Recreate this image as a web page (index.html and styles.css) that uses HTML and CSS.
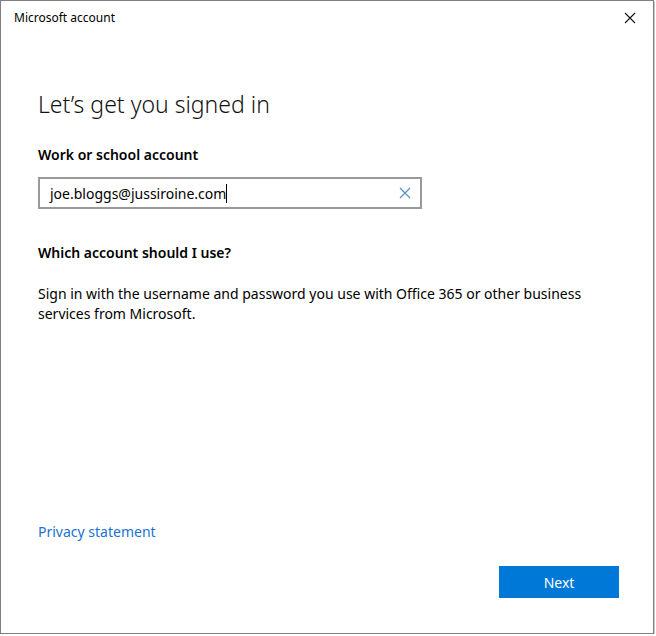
FILE: index.html
```html
<!DOCTYPE html>
<html>
<head>
<meta charset="utf-8">
<link rel="stylesheet" href="styles.css">
</head>
<body>
<div class="window">
  <div class="titlebar">
    <span class="title">Microsoft account</span>
    <svg class="close" width="12" height="12" viewBox="0 0 12 12"><path d="M1 1L11 11M11 1L1 11" stroke="#111" stroke-width="1.1"/></svg>
  </div>
  <div class="content">
    <h1 class="heading">Let’s get you signed in</h1>
    <div class="label">Work or school account</div>
    <div class="input">
      <span class="value">joe.bloggs@jussiroine.com</span><span class="caret"></span>
      <svg class="clear" width="12" height="12" viewBox="0 0 12 12"><path d="M1 1L11 11M11 1L1 11" stroke="#5a8fc4" stroke-width="1.2"/></svg>
    </div>
    <div class="subhead">Which account should I use?</div>
    <p class="desc">Sign in with the username and password you use with Office 365 or other business services from Microsoft.</p>
    <div class="spacer"></div>
    <a class="link">Privacy statement</a>
    <div class="actions">
      <button class="next">Next</button>
    </div>
  </div>
</div>
</body>
</html>
```
FILE: styles.css
```css
html, body { margin: 0; padding: 0; background: #fff; }
body { font-family: "Noto Sans", "Open Sans", sans-serif; color: #000; }
.window {
  width: 652px;
  height: 632px;
  border: 1px solid #7f7f7f;
  box-shadow: 1px 1px 0 #c8c8c8;
  display: flex;
  flex-direction: column;
  background: #fff;
}
.titlebar {
  height: 34px;
  display: flex;
  align-items: center;
  justify-content: space-between;
  padding: 0 17px 0 13px;
  box-sizing: border-box;
}
.title { font-size: 12px; color: #000; margin-top: -1px; }
.close { margin-top: 0; }
.content {
  flex: 1;
  display: flex;
  flex-direction: column;
  padding: 53px 34px 35px 37px;
}
.heading {
  margin: 0;
  font-size: 23px;
  font-weight: 300;
  line-height: 32px;
  color: #111;
}
.label {
  margin-top: 25px;
  font-size: 14px;
  font-weight: 600;
  line-height: 20px;
}
.input {
  margin-top: 12px;
  width: 384px;
  height: 32px;
  box-sizing: border-box;
  border: 2px solid #999;
  display: flex;
  align-items: center;
  padding: 0 9px 0 10px;
  font-size: 14px;
}
.value { color: #000; }
.caret { width: 1px; height: 19px; background: #000; }
.clear { margin-left: auto; }
.subhead {
  margin-top: 34px;
  font-size: 14px;
  font-weight: 600;
  line-height: 20px;
}
.desc {
  margin: 21px 0 0;
  font-size: 14px;
  line-height: 20px;
  width: 560px;
}
.spacer { flex: 1; }
.link {
  font-size: 14px;
  color: #1a73d1;
  line-height: 20px;
}
.actions {
  display: flex;
  justify-content: flex-end;
  margin-top: 24px;
}
.next {
  width: 120px;
  height: 32px;
  border: none;
  background: #0078d7;
  color: #fff;
  font-family: inherit;
  font-size: 14px;
  padding: 0;
}
```
